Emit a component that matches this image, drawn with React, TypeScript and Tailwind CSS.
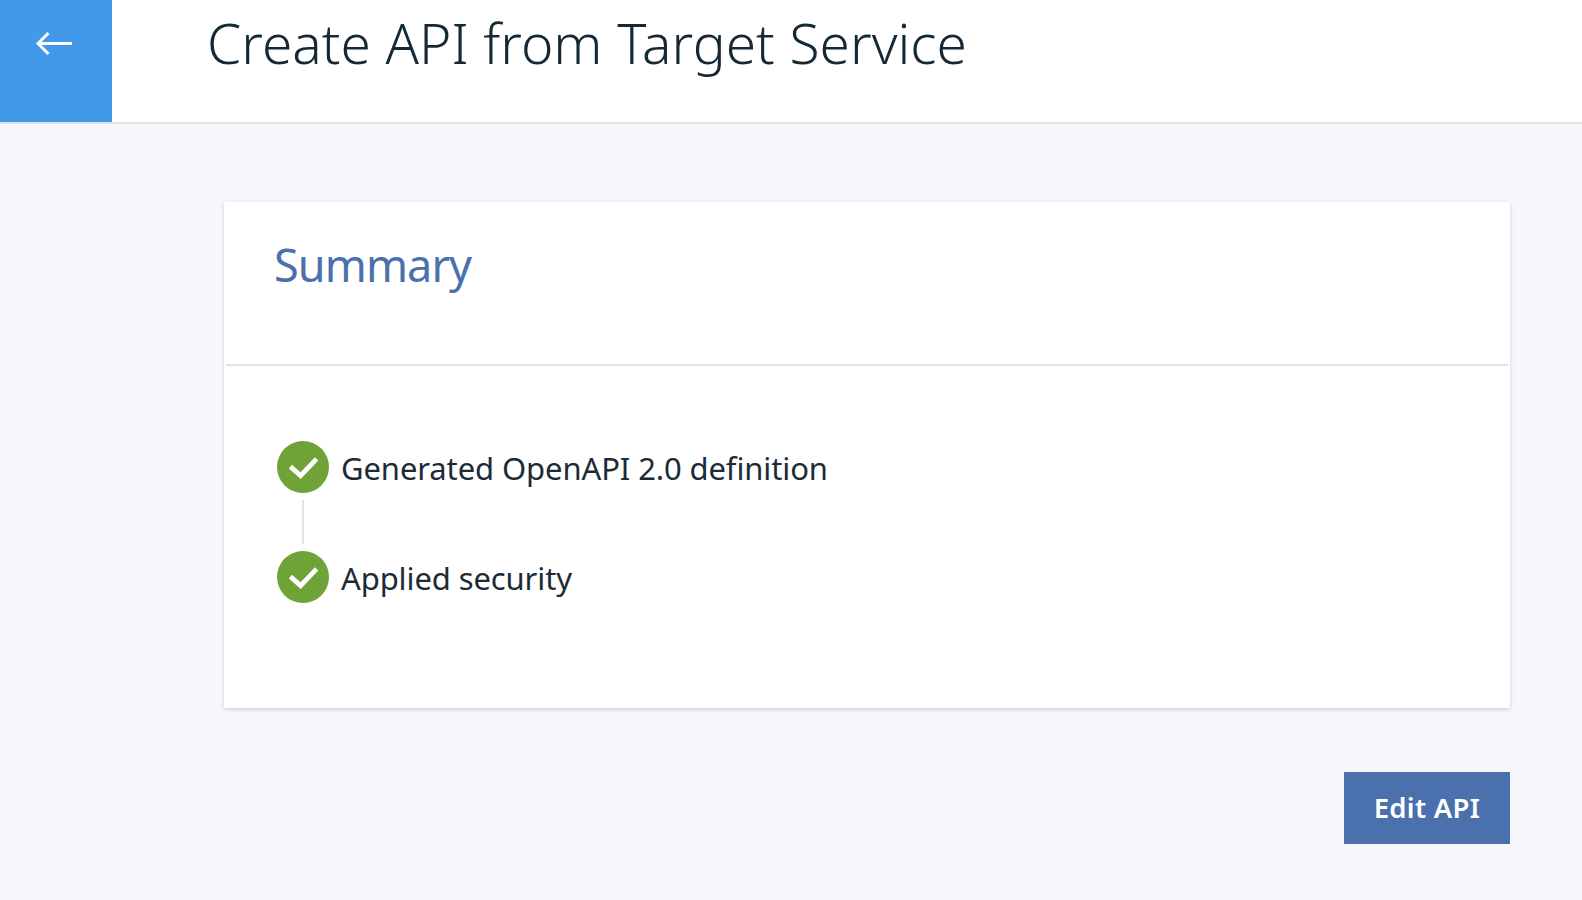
function BackArrow() {
  return (
    <svg width="40" height="26" viewBox="0 0 40 26" fill="none" stroke="white" strokeWidth="3">
      <path d="M4 12.5H38" />
      <path d="M14.5 2L4 12.5L14.5 23" />
    </svg>
  );
}

function CheckCircle() {
  return (
    <svg className="shrink-0" width="52" height="52" viewBox="0 0 52 52" fill="none">
      <circle cx="26" cy="26" r="26" fill="#6fa237" />
      <path d="M13.4 25.6L23.6 34.6L39.6 17.8" stroke="white" strokeWidth="4.8" />
    </svg>
  );
}

function Step({ label }: { label: string }) {
  return (
    <li className="flex h-[52px] items-center gap-3">
      <CheckCircle />
      <span className="pt-px text-[31px] leading-[46px] tracking-[-0.11px] whitespace-nowrap text-[#1c2b36]">{label}</span>
    </li>
  );
}

export default function App() {
  return (
    <div className="h-[900px] w-full overflow-hidden bg-[#f5f7fb] font-['Noto_Sans',sans-serif]">
      <header className="flex h-[124px] border-b-2 border-[#dfe3e6] bg-white">
        <button aria-label="Back" className="flex w-28 shrink-0 items-start bg-[#4399e9] pt-[31px] pl-[34px]">
          <BackArrow />
        </button>
        <h1 className="pt-[7px] pl-[95px] text-[55px] leading-[72px] font-light tracking-[0.02px] [word-spacing:0.4px] whitespace-nowrap text-[#152935]">
          Create API from Target Service
        </h1>
      </header>
      <main className="pt-[78px] pr-[72px] pl-[224px]">
        <section className="h-[506px] bg-white px-[2px] shadow-[0_2px_4px_rgba(0,0,0,0.12),0_0_4px_rgba(0,0,0,0.05)]">
          <div className="h-[164px] border-b-2 border-[#dfe3e6] pt-[32px] pl-12">
            <h2 className="text-[45px] leading-[62px] tracking-[-0.9px] text-[#4a70ad]">Summary</h2>
          </div>
          <ul className="pt-[75px] pl-[51px]">
            <Step label="Generated OpenAPI 2.0 definition" />
            <li aria-hidden="true" className="my-[7px] ml-[25px] h-11 w-[2px] bg-[#dfe3e6]" />
            <Step label="Applied security" />
          </ul>
        </section>
        <div className="flex justify-end pt-16">
          <button className="h-[72px] w-[166px] bg-[#4a70ad] text-[27.5px] leading-[72px] font-semibold tracking-[0.3px] whitespace-nowrap text-white">
            Edit API
          </button>
        </div>
      </main>
    </div>
  );
}
